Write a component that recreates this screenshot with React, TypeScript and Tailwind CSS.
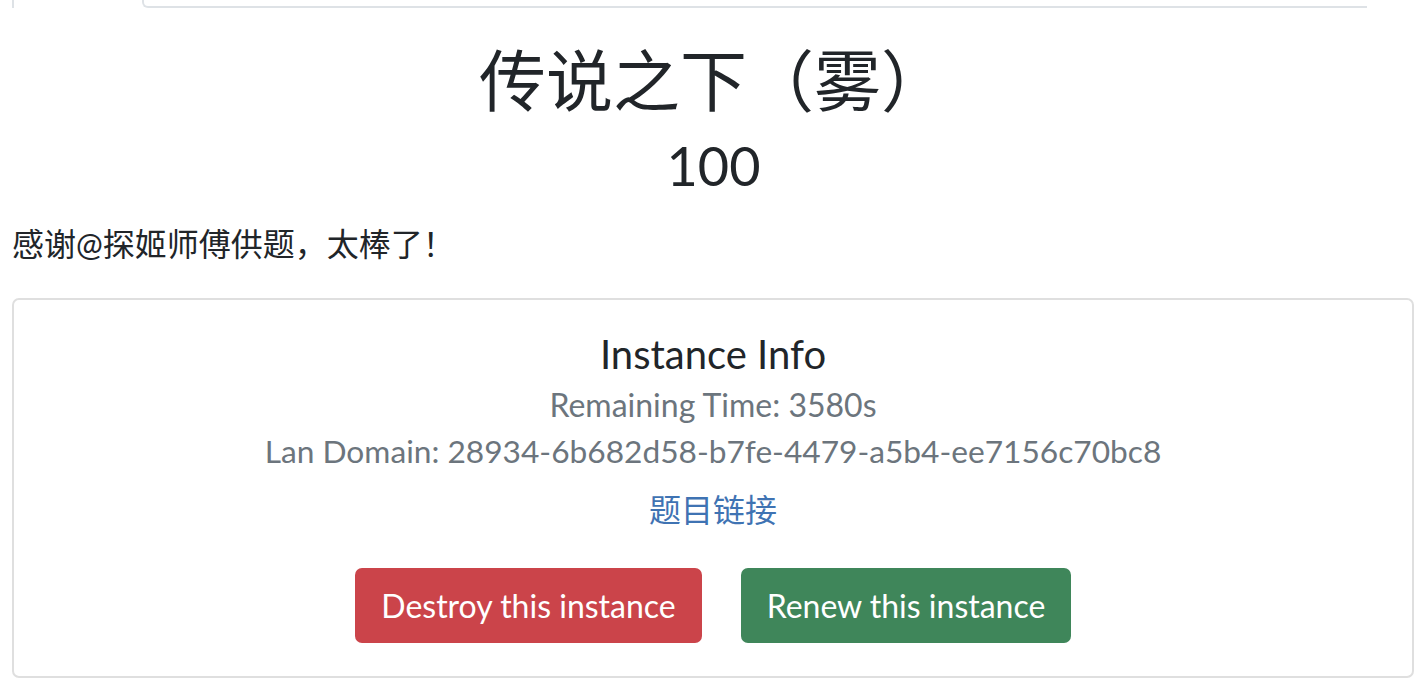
const instance = {
  remaining: 3580,
  domain: "28934-6b682d58-b7fe-4479-a5b4-ee7156c70bc8",
};

const font = "font-['Lato','Noto_Sans_CJK_SC',sans-serif]";

const App = () => (
  <div className={`${font} min-h-screen bg-white px-[12px] text-[#212529]`}>
    <div className="flex h-[8px]">
      <div className="w-[130px] border-l-2 border-[#dee2e6]" />
      <div className="w-[1225px] rounded-bl-[6px] border-b-2 border-l-2 border-[#dee2e6]" />
    </div>

    <div className="text-center">
      <h1 className="mt-[32px] text-[67px] leading-[80px]">传说之下（雾）</h1>
      <h2 className="mt-[14px] text-[54px] leading-[64px]">100</h2>
    </div>

    <p className="mt-[22px] text-[32px] leading-[48px]">感谢@探姬师傅供题，太棒了！</p>

    <div className="mt-[30px] mr-[1px] rounded-[7px] border-2 border-[#dfdfdf] px-6 pt-[30px] pb-[33px] text-center">
      <h4 className="text-[40px] leading-[48px]">Instance Info</h4>
      <p className="mt-[4px] text-[32px] leading-[46px] text-[#6c757d]">
        Remaining Time: {instance.remaining}s
      </p>
      <p className="text-[31.7px] leading-[46px] text-[#6c757d]">Lan Domain: {instance.domain}</p>
      <div className="mt-[13px] text-[32px] leading-[46px]">
        <a href="#" className="text-[#3f73b3]">
          题目链接
        </a>
      </div>
      <div className="mt-[35px] flex justify-center gap-[39px]">
        <button className="h-[75px] w-[347px] rounded-[7px] bg-[#cb444a] text-[32px] text-white">
          Destroy this instance
        </button>
        <button className="h-[75px] w-[330px] rounded-[7px] bg-[#3f865a] text-[32px] text-white">
          Renew this instance
        </button>
      </div>
    </div>
  </div>
);

export default App;
